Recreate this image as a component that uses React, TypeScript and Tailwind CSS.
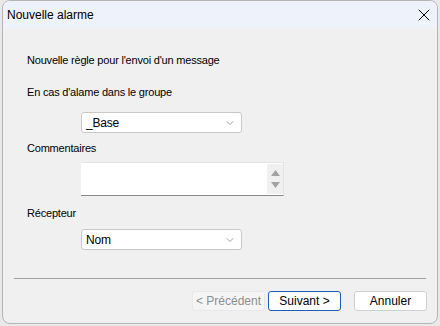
import { X, ChevronDown } from "lucide-react";

function Combo({ value }: { value: string }) {
    return (
        <div className="flex h-[21px] w-[161px] items-center justify-between rounded-[3px] border border-[#c8c8c8] bg-white pl-[4px] pr-[5px]">
            <span className="text-[12px] leading-[14px] text-black">{value}</span>
            <ChevronDown size={12} strokeWidth={1.2} className="text-[#606060]" />
        </div>
    );
}

export default function App() {
    return (
        <div
            className="flex h-[326px] w-[440px] bg-[#e9e9e9]"
            style={{ fontFamily: '"Liberation Sans", Arial, sans-serif' }}
        >
            <div className="ml-[2px] flex h-[324px] w-[436px] flex-col overflow-hidden rounded-lg border border-[#b5b5b5] bg-[#f0f0f0]">
                <div className="flex h-[27px] shrink-0 items-center justify-between bg-[#eef2fa] pl-[4px] pr-[3px]">
                    <span className="text-[12px] text-black">Nouvelle alarme</span>
                    <X size={20} strokeWidth={1.2} className="text-black" />
                </div>
                <div className="flex flex-1 flex-col px-[24px] text-[11px] leading-[14px] tracking-[-0.2px] text-black">
                    <div className="mt-[25px]">Nouvelle règle pour l'envoi d'un message</div>
                    <div className="mt-[18px]">En cas d'alame dans le groupe</div>
                    <div className="ml-[54px] mt-[13px]">
                        <Combo value="_Base" />
                    </div>
                    <div className="mt-[8px]">Commentaires</div>
                    <div className="ml-[54px] mt-[7px] flex h-[34px] w-[203px] border-t border-r border-b border-[#e4e4e4] border-b-[#8a8a8a] bg-white">
                        <div className="flex-1" />
                        <div className="my-[1px] flex w-[16px] flex-col items-center justify-center gap-[6px] bg-[#f0f0f0]">
                            <svg width="9" height="6" viewBox="0 0 9 6">
                                <path d="M4.5 0 L9 6 L0 6 Z" fill="#a3a3a3" />
                            </svg>
                            <svg width="9" height="6" viewBox="0 0 9 6">
                                <path d="M0 0 L9 0 L4.5 6 Z" fill="#a3a3a3" />
                            </svg>
                        </div>
                    </div>
                    <div className="mt-[10px]">Récepteur</div>
                    <div className="ml-[54px] mt-[9px]">
                        <Combo value="Nom" />
                    </div>
                </div>
                <div className="mx-[11px] h-px bg-[#a0a0a0]" />
                <div className="flex h-[44px] shrink-0 items-center justify-end gap-[3px] pr-[10px] text-[12px]">
                    <button className="h-[20px] w-[73px] rounded-[3px] border border-[#e8e8e8] bg-[#f5f5f5] text-[#8e8e8e]">
                        &lt; Précédent
                    </button>
                    <button className="h-[20px] w-[73px] rounded-[3px] border border-[#1a5fb4] bg-white text-black">
                        Suivant &gt;
                    </button>
                    <button className="ml-[10px] h-[20px] w-[73px] rounded-[3px] border border-[#cfcfcf] bg-white text-black">
                        Annuler
                    </button>
                </div>
            </div>
        </div>
    );
}
